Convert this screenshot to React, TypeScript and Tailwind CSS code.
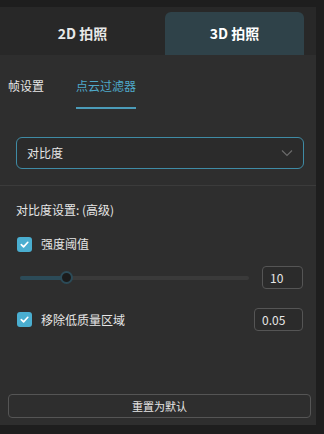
import React, { useState } from 'react'

const font = { fontFamily: '"Noto Sans CJK SC", "Noto Sans", sans-serif' }

function Check({ label }: { label: string }) {
  return (
    <div className="flex h-[18px] items-center gap-[9px]">
      <div className="flex h-[15px] w-[15px] items-center justify-center rounded-[3px] bg-[#4aaed0]">
        <svg width="11" height="11" viewBox="0 0 12 12" fill="none">
          <path d="M2.5 6.2 5 8.6 9.6 3.6" stroke="#ffffff" strokeWidth="1.8" strokeLinecap="round" strokeLinejoin="round" />
        </svg>
      </div>
      <span className="text-[12px] leading-[18px] text-[#e6e6e6]">{label}</span>
    </div>
  )
}

export default function App() {
  const [tab, setTab] = useState(1)
  const [subTab, setSubTab] = useState(1)

  return (
    <div className="flex h-[434px] w-[324px] bg-[#1e1e1e]" style={font}>
      <div className="flex w-[316px] flex-col">
        <div className="h-[7px]" />
        {/* capture tabs */}
        <div className="flex h-[48px] bg-[#282828] pt-[5px]">
          <div
            onClick={() => setTab(0)}
            className={`flex w-[165px] cursor-pointer items-center justify-center rounded-t-md text-[14px] font-bold text-[#e8e8e8] ${
              tab == 0 ? 'bg-[#2f4249]' : ''
            }`}
          >
            2D 拍照
          </div>
          <div
            onClick={() => setTab(1)}
            className={`flex w-[139px] cursor-pointer items-center justify-center rounded-t-md text-[14px] font-bold text-white ${
              tab == 1 ? 'bg-[#2f4249]' : ''
            }`}
          >
            3D 拍照
          </div>
        </div>

        <div className="flex flex-1 flex-col bg-[#2e2e2e]">
          {/* sub tabs */}
          <div className="flex h-[54px] items-end gap-[32px] px-[8px]">
            <div
              onClick={() => setSubTab(0)}
              className={`cursor-pointer pb-[14px] text-[12px] leading-[18px] ${subTab == 0 ? 'text-[#4fa9c9]' : 'text-[#e6e6e6]'}`}
            >
              帧设置
            </div>
            <div
              onClick={() => setSubTab(1)}
              className={`cursor-pointer border-b-[2px] pb-[12px] text-[12px] leading-[18px] ${
                subTab == 1 ? 'border-[#4b9bb8] text-[#4fa9c9]' : 'border-transparent text-[#e6e6e6]'
              }`}
            >
              点云过滤器
            </div>
          </div>

          {/* mode select */}
          <div className="px-[16px] pt-[28px] pr-[12px]">
            <div className="flex h-[32px] items-center justify-between rounded-[6px] border-[1.5px] border-[#3f8ba5] bg-[#2b2b2b] pl-[10px] pr-[10px]">
              <span className="text-[12px] leading-[18px] text-[#e6e6e6]">对比度</span>
              <svg width="12" height="8" viewBox="0 0 12 8" fill="none">
                <path d="M1 1.5 6 6.5 11 1.5" stroke="#6b6b6b" strokeWidth="1.2" />
              </svg>
            </div>
          </div>

          <div className="mt-[16px] h-px bg-[#3b3b3b]" />

          <div className="flex flex-col px-[16px] pr-[13px]">
            <div className="mt-[15px] text-[12px] leading-[18px] text-[#e6e6e6]">对比度设置: (高级)</div>

            <div className="mt-[16px] pl-[1px]">
              <Check label="强度阈值" />
            </div>

            <div className="mt-[13px] flex items-center justify-between">
              <div className="relative ml-[4px] h-[4px] w-[229px] rounded-full bg-[#3a3a3a]">
                <div className="h-[4px] w-[46px] rounded-full bg-[#2c4b58]" />
                <div className="absolute left-[40px] top-[-5px] h-[13px] w-[13px] rounded-full border-[2px] border-[#2c4b58] bg-[#1b1b1b]" />
              </div>
              <div className="flex h-[23px] w-[41px] items-center rounded-[4px] border border-[#555555] bg-[#2b2b2b] pl-[7px] text-[12px] text-[#e6e6e6]">
                10
              </div>
            </div>

            <div className="mt-[19px] flex items-center justify-between pl-[1px]">
              <Check label="移除低质量区域" />
              <div className="flex h-[23px] w-[49px] items-center rounded-[4px] border border-[#555555] bg-[#2b2b2b] pl-[7px] text-[12px] text-[#e6e6e6]">
                0.05
              </div>
            </div>
          </div>

          <div className="flex-1" />

          <div className="px-[8px] pb-[7px] pr-[5px]">
            <div className="flex h-[24px] items-center justify-center rounded-[4px] border border-[#555555] bg-[#2e2e2e] text-[11px] text-[#e6e6e6]">
              重置为默认
            </div>
          </div>
        </div>
        <div className="h-[9px]" />
      </div>
    </div>
  )
}
